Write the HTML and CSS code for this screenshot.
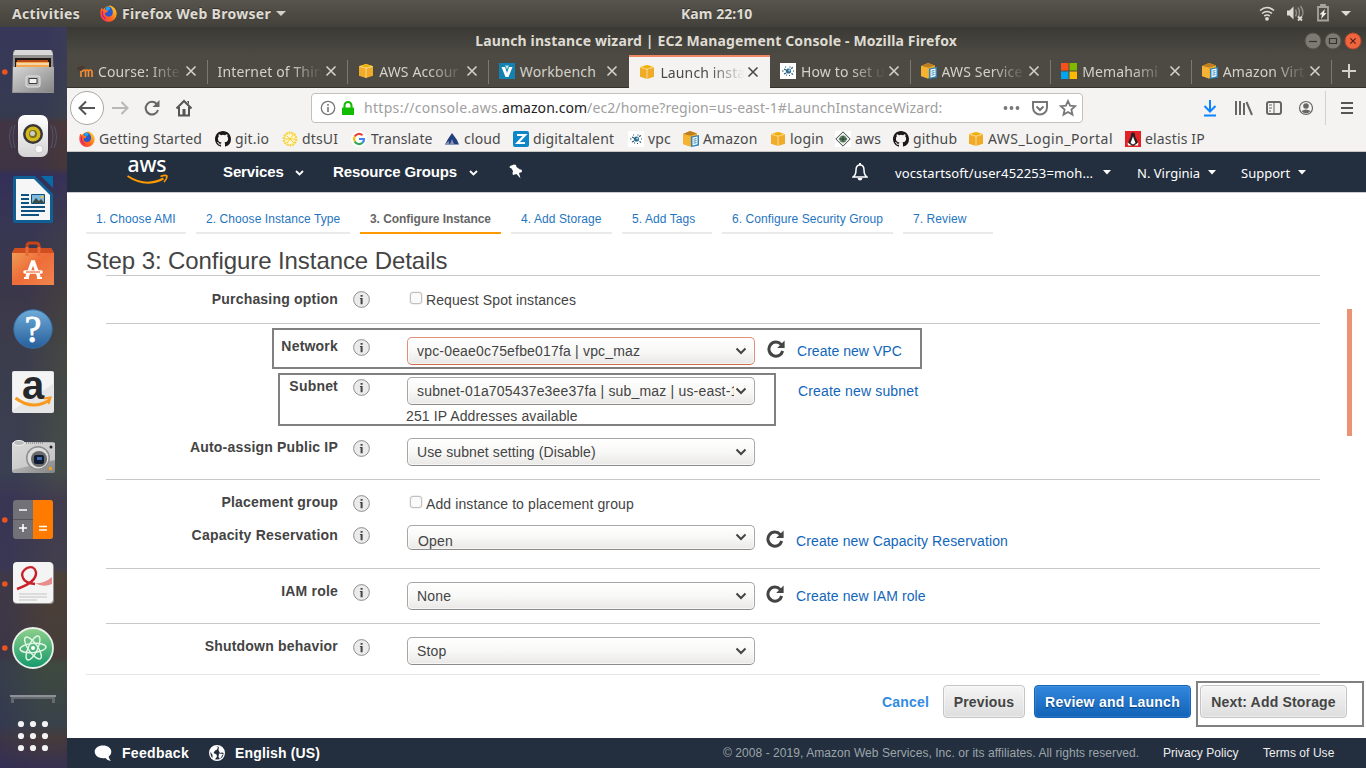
FILE: index.html
```html
<!DOCTYPE html>
<html lang="en">
<head>
<meta charset="utf-8">
<title>Launch instance wizard | EC2 Management Console</title>
<link rel="stylesheet" href="styles.css">
</head>
<body>
<svg class="defs" xmlns="http://www.w3.org/2000/svg">
  <defs>
    <linearGradient id="gMetal" x1="0" y1="0" x2="1" y2="1"><stop offset="0" stop-color="#d6d6d6"/><stop offset="1" stop-color="#858585"/></linearGradient>
    <linearGradient id="gWhite" x1="0" y1="0" x2="0" y2="1"><stop offset="0" stop-color="#fff"/><stop offset="1" stop-color="#d4d4d4"/></linearGradient>
    <linearGradient id="gBag" x1="0" y1="0" x2="1" y2="1"><stop offset="0" stop-color="#f0a258"/><stop offset=".5" stop-color="#ee6c38"/><stop offset="1" stop-color="#f0854e"/></linearGradient>
    <linearGradient id="gHelp" x1="0" y1="0" x2="0" y2="1"><stop offset="0" stop-color="#6fabd8"/><stop offset="1" stop-color="#265f9c"/></linearGradient>
    <linearGradient id="gAtom" x1="0" y1="0" x2="0" y2="1"><stop offset="0" stop-color="#8fd08a"/><stop offset="1" stop-color="#13996c"/></linearGradient>
    <linearGradient id="gFox" x1="0" y1="1" x2="1" y2="0"><stop offset="0" stop-color="#f2265a"/><stop offset=".45" stop-color="#ff6a1c"/><stop offset="1" stop-color="#ffe226"/></linearGradient>
  </defs>
  <symbol id="firefox" viewBox="0 0 16 16">
    <path d="M1.200 2.800l1.800 1.300C4.500 2 7 1 9.500.4 13 1.500 15.700 4.500 15.700 8.300a7.700 7.700 0 0 1-15.400 0c0-2 .2-3.700.9-5.500z" fill="url(#gFox)"/>
    <path d="M5 2.600C7 1 9 1.200 10 2.200c2 1.800 2.400 4.200 1.800 6.300-.8 2.300-3.300 3-5.300 2.200C5 10 4.500 8.500 4.800 7.600l2-.9.9-1.300-2.300-.7-.8-1z" fill="#2a56d0"/>
    <path d="M5.500 2.500Q8 1 9.800 3L8 5.200 5.500 4.500z" fill="#21a8ee"/>
    <path d="M2.500 5.500q-1 5 3 7.500" stroke="#c8158c" stroke-width="1" fill="none"/>
  </symbol>
  <symbol id="cube" viewBox="0 0 16 16">
    <path d="M1 3.200L8 1l7 2.200v9.600L8 15l-7-2.200z" fill="#f0ac28"/><path d="M1 3.200L8 1l7 2.200-7 1.800z" fill="#f8bf12"/><path d="M8 5v10M1.500 3.400L8 5.200l6.500-1.800" stroke="#fbe3ac" stroke-width=".8" fill="none"/><path d="M5 2l6 2.200M11 2L5 4.200" stroke="#d99a1c" stroke-width=".5"/>
  </symbol>
  <symbol id="cubedoc" viewBox="0 0 16 16">
    <path d="M0 3l7-3 7 2.400v10.200L7 15.500 0 13z" fill="#f0ac28"/><path d="M0 3l7-3 7 2.400-7 2.400z" fill="#bd7d21"/><path d="M0 3l7 1.800v10.700L0 13z" fill="#f6b333"/><path d="M8 5.500l8-1.500v10.500L8 16z" fill="#2e83b8"/><path d="M9.500 6.500l5-1v7.800l-5 1.200z" fill="#fff"/><path d="M10.500 8.200l3-.6M10.500 10.200l3-.6M10.500 12.200l3-.6" stroke="#2e83b8"/>
  </symbol>
  <symbol id="github" viewBox="0 0 16 16"><path fill="#1b1817" fill-rule="evenodd" d="M8 0C3.580 0 0 3.580 0 8c0 3.540 2.290 6.530 5.470 7.590.4.070.55-.17.55-.38 0-.19-.01-.82-.01-1.490-2.010.37-2.530-.49-2.690-.94-.09-.23-.48-.94-.82-1.130-.28-.15-.68-.52-.01-.53.63-.01 1.080.58 1.230.82.72 1.210 1.870.87 2.330.66.070-.52.28-.87.51-1.070-1.780-.2-3.640-.89-3.640-3.950 0-.87.31-1.590.82-2.150-.08-.2-.36-1.020.08-2.120 0 0 .67-.21 2.200.82a7.600 7.600 0 0 1 4 0c1.530-1.040 2.200-.82 2.200-.82.44 1.100.16 1.920.08 2.120.51.56.82 1.270.82 2.150 0 3.070-1.870 3.750-3.650 3.950.29.25.54.73.54 1.480 0 1.070-.01 1.930-.01 2.200 0 .21.15.46.55.38A8 8 0 0 0 16 8c0-4.420-3.580-8-8-8z"/></symbol>
  <symbol id="chip" viewBox="0 0 16 16"><path fill="#fff" d="M0 0h16v16H0z"/><circle cx="8.500" cy="8" r="2.600" fill="#2b6c93"/><circle cx="9.300" cy="7.500" r="1.100" fill="#a5d8ea"/><path d="M4 6l2 1M2 8h1.500M4 11l2-1M11 5.500l2-1M13 8h1M11.500 10.500l1.500 1M6.500 11.500v1M10 4.500V3.500M5 4h1M9 12.500h1" stroke="#24506e" stroke-width="1.100"/></symbol>
  <symbol id="close" viewBox="0 0 12 12"><path d="M1.500 1.500l9 9M10.500 1.500l-9 9" stroke="currentColor" stroke-width="1.600" fill="none"/></symbol>
  <symbol id="reload" viewBox="0 0 18 18"><path d="M14.300 4.600A7 7 0 1 0 15.700 11" fill="none" stroke="#444" stroke-width="3"/><path d="M17.600 .6v7.400h-7.400z" fill="#444"/></symbol>
  <symbol id="info" viewBox="0 0 17 17"><circle cx="8.500" cy="8.500" r="7.900" fill="#ebebeb" stroke="#8e8e8e"/><path d="M7.600 4h2v1.700h-2zM6.900 7.100h2.700v6.200h-2V8.100h-.7z" fill="#444"/></symbol>
  <symbol id="chev" viewBox="0 0 12 8"><path d="M1.500 1.500L6 6l4.500-4.500" stroke="#444" stroke-width="2" fill="none"/></symbol>
</svg>

<header class="topbar">
  <span class="activities">Activities</span>
  <svg class="i16"><use href="#firefox"/></svg>
  <span class="appname">Firefox Web Browser</span>
  <svg class="tri" viewBox="0 0 10 5"><path d="M0 0h10L5 5z" fill="#d3d0c8"/></svg>
  <span class="clock">Kam 22:10</span>
  <svg class="tray" viewBox="0 0 96 20">
    <g fill="none" stroke="#dedbd5" stroke-width="1.600"><path d="M3 7.500q7-6 14 0M5 10.500q5-4 10 0M7.200 13q2.800-2 5.600 0"/></g><circle cx="10" cy="15.800" r="1.900" fill="#dedbd5"/>
    <path d="M30 7.500h2.500l4-4v13l-4-4H30z" fill="#dedbd5"/><path d="M38.500 6.500q2 3.500 0 7M41 4.500q3 5 0 10M43.500 3q4 6 1.500 10" stroke="#8f8d86" stroke-width="1.500" fill="none"/><path d="M41 13.500l4 4M45 13.500l-4 4" stroke="#dedbd5" stroke-width="1.800"/>
    <path d="M61 4h10v13.500H61zM64 2h4v2h-4z" fill="none" stroke="#a6a49d" stroke-width="1.800"/><path d="M68 6l-5.500 5.500H65l-1 4.500 5.500-6H67z" fill="#f0eee9"/>
    <path d="M84 8h10l-5 5z" fill="#dedbd5"/>
  </svg>
</header>

<div class="desktop">
<nav class="dock">
  <svg class="launcher" viewBox="0 0 67 64"><circle cx="4.800" cy="32" r="2.800" fill="#e95420"/><path d="M13 13q0-3 3-3h34q3 0 3 3l1 40H12z" fill="#929292"/><path d="M15 10h36l2 5H13z" fill="#d9d9d9"/><path d="M15 18h36v12H15z" fill="#1f1a18"/><path d="M17 20h31v8H17z" fill="#b94a18"/><path d="M16 22h33v6H16z" fill="#f3a64b"/><path d="M17 24h32" stroke="#f6e3c8" stroke-width="1.500"/><path d="M13 27h41v25H13z" fill="url(#gMetal)"/><rect x="26" y="36" width="14" height="11" rx="2" fill="#bbb" stroke="#e4e4e4"/><path d="M29 38.500h8v5h-8z" fill="#f1f1f1" stroke="#3c3c3c"/></svg>
  <svg class="launcher" viewBox="0 0 67 64"><path d="M12 22q-5 11 0 22M15 21q-4 11 0 23M54 22q5 11 0 22M51 21q4 11 0 23" stroke="#566a8c" stroke-opacity=".6" fill="none"/><rect x="18" y="11" width="30" height="42" rx="7" fill="url(#gWhite)"/><circle cx="33" cy="30" r="10" fill="#38383a"/><circle cx="33" cy="30" r="7.500" fill="#d4b91c"/><circle cx="33" cy="30" r="4" fill="#77711f"/><circle cx="32.500" cy="29.500" r="2.500" fill="#ccc"/><circle cx="39" cy="45" r="4" fill="#f7f7f7" stroke="#ccc"/></svg>
  <svg class="launcher" viewBox="0 0 67 64"><path d="M15 8h20l18 18v28q0 1-1 1H15q-2 0-2-2V10q0-2 2-2z" fill="#0f5f94"/><path d="M16 11h18l16 16v25H16z" fill="#f6f6f6"/><path d="M41 8h12v12z" fill="#0a6aa8"/><path d="M21 27h8M21 31h8M21 35h8M21 39h24M21 43h24M21 47h18" stroke="#10527f" stroke-width="2"/><path d="M31.500 26.500h13v9h-13z" fill="#7db9df" stroke="#10527f"/><path d="M32 35l4-5 3 3 2-2 3.500 4z" fill="#3c4b43"/><circle cx="42" cy="29" r="1.300" fill="#f5c12c"/></svg>
  <svg class="launcher" viewBox="0 0 67 64"><path d="M27 23v-9q0-3 3-3h6q3 0 3 3v9" fill="none" stroke="#c74418" stroke-width="3"/><path d="M15 16h36l3 5v32H12V21z" fill="url(#gBag)"/><path d="M12 21l3-5h36l3 5z" fill="#cf4d1f"/><path d="M27 24V15M39 24V15" stroke="#e8693a" stroke-width="3"/><path d="M27 45l5.500-15h1L39 45" fill="none" stroke="#fff" stroke-width="3.600"/><path d="M25 40h16" stroke="#fff" stroke-width="3.600" stroke-linecap="round"/><path d="M26 40h14" stroke="#ee6c38" stroke-width="1.200"/><path d="M24 46h5M37 46h5" stroke="#fff" stroke-width="2"/></svg>
  <svg class="launcher" viewBox="0 0 67 64"><circle cx="33" cy="33" r="19.200" fill="url(#gHelp)" stroke="#3770a8"/><text x="33" y="45.500" text-anchor="middle" class="help-mark">?</text></svg>
  <svg class="launcher" viewBox="0 0 67 64"><rect x="12" y="11" width="42" height="42" rx="2" fill="#e6e6e6"/><path d="M13 12h40v12L13 50z" fill="#f4f4f4"/><text x="33" y="39" text-anchor="middle" class="amazon-a">a</text><path d="M15.500 38q17 13 34 2" stroke="#f79a1d" stroke-width="3" fill="none"/><path d="M44 38.500l6.500-1-2 6.500" stroke="#f79a1d" stroke-width="2" fill="none"/></svg>
  <svg class="launcher" viewBox="0 0 67 64"><rect x="12" y="18" width="43" height="31" rx="2" fill="url(#gMetal)"/><path d="M12 19h43v17L12 46z" fill="#ddd" opacity=".65"/><ellipse cx="19" cy="19" rx="5.500" ry="2.500" fill="#bbb" stroke="#eee"/><path d="M26 19h17" stroke="#777" stroke-dasharray="1 1"/><circle cx="38" cy="34" r="12" fill="#8e8e8e"/><circle cx="38" cy="34" r="10.500" fill="#ddd"/><circle cx="39" cy="35" r="8" fill="#696969"/><rect x="34" y="31" width="10" height="9" rx="2" fill="#101a33"/><path d="M37 33h5v3h-5z" fill="#3c69a8"/><circle cx="51" cy="23" r="1.500" fill="#222"/><path d="M49 43h3v3h-3z" fill="#efa01a"/></svg>
  <svg class="launcher" viewBox="0 0 67 64"><circle cx="4.800" cy="32" r="2.800" fill="#e95420"/><rect x="13" y="12" width="40" height="39" rx="3" fill="#717177"/><path d="M33 12h17q3 0 3 3v33q0 3-3 3H33z" fill="#ff7b00"/><path d="M13 31.500h20" stroke="#55555a"/><path d="M19 22h8M19 40h8M23 36v8M39 38.500h8M39 42h8" stroke="#fff" stroke-width="1.600"/></svg>
  <svg class="launcher" viewBox="0 0 67 64"><circle cx="4.800" cy="32" r="2.800" fill="#e95420"/><rect x="13" y="11" width="41" height="41" rx="4" fill="#8f8f8f"/><rect x="13" y="10" width="40" height="41" rx="4" fill="#f4f4f4"/><path d="M35 31q9 1 17-6v7q-9 4-17-1z" fill="#e98c8c"/><path d="M17 37q20-7 19-17-2-7-9-4-7 4-4 10 2 5 12 6" stroke="#c9212b" stroke-width="2.400" fill="none"/><path d="M19 42h28M19 45h28M19 48h18" stroke="#c4c4c4" stroke-width="1.200"/></svg>
  <svg class="launcher" viewBox="0 0 67 64"><circle cx="4.800" cy="32" r="2.800" fill="#e95420"/><circle cx="33" cy="32" r="20" fill="url(#gAtom)" stroke="#e9efe9" stroke-width="1.800"/><g fill="none" stroke="#e6f7ea" stroke-width="1.400"><ellipse cx="33" cy="32" rx="13" ry="4.600" transform="rotate(-5 33 32)"/><ellipse cx="33" cy="32" rx="13" ry="4.600" transform="rotate(55 33 32)"/><ellipse cx="33" cy="32" rx="13" ry="4.600" transform="rotate(115 33 32)"/></g><circle cx="33" cy="32" r="2" fill="#fff"/></svg>
  <svg class="launcher-end" viewBox="0 0 67 88"><path d="M11 15h44v8h-3v-4H14v4h-3z" fill="#777b80" opacity=".7"/><path d="M10 16h46" stroke="#8e9297" stroke-width="2"/><g fill="#f3f3f3"><circle cx="21" cy="44" r="3.100"/><circle cx="33" cy="44" r="3.100"/><circle cx="45" cy="44" r="3.100"/><circle cx="21" cy="56" r="3.100"/><circle cx="33" cy="56" r="3.100"/><circle cx="45" cy="56" r="3.100"/><circle cx="21" cy="68" r="3.100"/><circle cx="33" cy="68" r="3.100"/><circle cx="45" cy="68" r="3.100"/></g></svg>
</nav>

<div class="window">
  <div class="titlebar"><span>Launch instance wizard | EC2 Management Console - Mozilla Firefox</span>
    <svg class="winbtns" viewBox="0 0 58 18"><circle cx="9" cy="9" r="8" fill="#7d7a73" stroke="#55524b"/><path d="M5 9.500h8" stroke="#34332f" stroke-width="1.200"/><circle cx="29" cy="9" r="8" fill="#7d7a73" stroke="#55524b"/><path d="M25.500 6.500h7v5h-7z" fill="none" stroke="#34332f" stroke-width="1.200"/><circle cx="49" cy="9" r="8" fill="#ee6540" stroke="#b8492a"/><path d="M46.300 6.300l5.400 5.400M51.700 6.300l-5.400 5.400" stroke="#572011" stroke-width="1.200"/></svg>
  </div>
  <div class="tabs">
    <div class="tab"><svg class="i16" viewBox="0 0 16 16"><path d="M4 14V8M8.500 14V9q0-2 1.500-2T11.500 9v5M11.500 9q0-2 1.700-2T15 9v5M5.500 9q0-2 1.500-2T8.500 9" stroke="#f08a35" stroke-width="1.700" fill="none"/><path d="M0 5l6-2 2 2-5 2zM1 5v4" stroke="#4b3a34" fill="#4b3a34"/></svg><span class="t">Course: Inte</span><svg class="x"><use href="#close"/></svg></div>
    <div class="tab"><span class="t wide">Internet of Thin</span><svg class="x"><use href="#close"/></svg></div>
    <div class="tab"><svg class="i16"><use href="#cube"/></svg><span class="t">AWS Accour</span><svg class="x"><use href="#close"/></svg></div>
    <div class="tab last"><svg class="i16" viewBox="0 0 16 16"><path d="M0 0h16v16H0z" fill="#1183b2"/><path d="M2.500 4H6l2 6 2-6h3.500L9.500 14h-3z" fill="#fff"/><path d="M6 2.500h4l-2 4z" fill="#bfe3f0"/></svg><span class="t full">Workbench</span><svg class="x"><use href="#close"/></svg></div>
    <div class="tab active"><svg class="i16"><use href="#cube"/></svg><span class="t">Launch insta</span><svg class="x"><use href="#close"/></svg></div>
    <div class="tab"><svg class="i16"><use href="#chip"/></svg><span class="t">How to set u</span><svg class="x"><use href="#close"/></svg></div>
    <div class="tab"><svg class="i16"><use href="#cubedoc"/></svg><span class="t">AWS Service</span><svg class="x"><use href="#close"/></svg></div>
    <div class="tab"><svg class="i16" viewBox="0 0 16 16"><path d="M0 0h7.500v7.500H0z" fill="#f4511e"/><path d="M8.500 0H16v7.500H8.500z" fill="#7fba00"/><path d="M0 8.500h7.500V16H0z" fill="#00a4ef"/><path d="M8.500 8.500H16V16H8.500z" fill="#ffb900"/></svg><span class="t">Memahami</span><svg class="x"><use href="#close"/></svg></div>
    <div class="tab"><svg class="i16"><use href="#cubedoc"/></svg><span class="t">Amazon Virt</span><svg class="x"><use href="#close"/></svg></div>
    <svg class="plus" viewBox="0 0 14 14"><path d="M7 0v14M0 7h14" stroke="#d4d1c9" stroke-width="2"/></svg>
  </div>

  <div class="toolbar">
    <svg class="navicons" viewBox="0 0 132 36"><circle cx="20" cy="18" r="16.500" fill="#fff" stroke="#aaa7a2"/><path d="M28 18H13M19 11.500L12.500 18l6.500 6.500" stroke="#555" stroke-width="2" fill="none"/><path d="M45 18h15M54.500 12l6 6-6 6" stroke="#b9b8b5" stroke-width="2" fill="none"/><path d="M89.700 14A6.300 6.300 0 1 0 91 20" stroke="#666" stroke-width="2" fill="none"/><path d="M92.500 10v7h-7z" fill="#666"/><path d="M109.500 18.500L117 11l7.500 7.500M112 17v8.500h10V17" stroke="#555" stroke-width="2" fill="none"/><path d="M115.500 19h3v6h-3zM120 11h2v4z" fill="#555"/></svg>
    <div class="url">
      <svg class="urlicons" viewBox="0 0 36 20"><circle cx="8" cy="10" r="6.700" fill="none" stroke="#777" stroke-width="1.300"/><path d="M8 9v5M8 6v1.800" stroke="#777" stroke-width="1.600"/><path d="M22 9.500h12V17H22z" fill="#12bc00"/><path d="M24.500 10V7.500a3.500 3.500 0 0 1 7 0V10" stroke="#12bc00" stroke-width="2" fill="none"/></svg>
      <span class="address"><span class="host">https://console.aws.</span><b>amazon.com</b>/ec2/home?region=us-east-1#LaunchInstanceWizard:</span>
      <svg class="pageicons" viewBox="0 0 76 20"><g fill="#777"><circle cx="4.500" cy="10" r="1.900"/><circle cx="10.500" cy="10" r="1.900"/><circle cx="16.500" cy="10" r="1.900"/></g><path d="M32 4h14v5.500a7 7 0 0 1-14 0zM35.500 8.500l3.500 3.500 3.500-3.500" fill="none" stroke="#777" stroke-width="2"/><path d="M67 3l2.100 4.700 5.100.5-3.800 3.400 1.100 5-4.500-2.600-4.500 2.600 1.100-5-3.800-3.400 5.100-.5z" fill="none" stroke="#777" stroke-width="1.800"/></svg>
    </div>
    <svg class="toolicons" viewBox="0 0 163 36"><path d="M7 10v11M1.500 16L7 21.500l5.500-5.500M1 25.500h12" stroke="#0a84ff" stroke-width="2" fill="none"/><path d="M33 11v14M37 11v14M41 13v12M43.500 12l5.500 13" stroke="#666" stroke-width="2" fill="none"/><rect x="64" y="12" width="14" height="12" rx="2" fill="none" stroke="#666" stroke-width="2"/><path d="M71 12v12" stroke="#666"/><path d="M66 15h3M66 18h3M66 21h2" stroke="#666"/><circle cx="103" cy="18" r="6.500" fill="none" stroke="#666" stroke-width="1.200"/><circle cx="103" cy="16" r="2.800" fill="#666"/><path d="M98.500 21q4.500-3 9 0-4.500 5-9 0z" fill="#666"/><path d="M122.500 1v34" stroke="#d3d1ce"/><path d="M138 13h12M138 18h12M138 23h12" stroke="#555" stroke-width="2"/></svg>
  </div>

  <div class="bookmarks">
    <a><svg class="i16"><use href="#firefox"/></svg>Getting Started</a>
    <a><svg class="i16"><use href="#github"/></svg>git.io</a>
    <a><svg class="i16" viewBox="0 0 16 16"><circle cx="8" cy="8" r="6.200" fill="#fff8d6" stroke="#f5d544" stroke-width="2.400" stroke-dasharray="2 .7"/><path d="M3 8h10M5 5l3 3 3-4M5 12l3-4 4 4" stroke="#f3cf35" fill="none"/></svg>dtsUI</a>
    <a><svg class="i16" viewBox="0 0 16 16"><circle cx="8" cy="8" r="8" fill="#fff"/><g fill="none" stroke-width="2.200"><path d="M3.700 5.500A5 5 0 0 1 11.500 4.300" stroke="#ea4335"/><path d="M3.700 5.500a5 5 0 0 0 0 5" stroke="#fbbc05"/><path d="M3.700 10.500a5 5 0 0 0 7.700 1.300" stroke="#34a853"/><path d="M11.400 11.800A5 5 0 0 0 13 8H8" stroke="#4285f4"/></g></svg>Translate</a>
    <a><svg class="i16" viewBox="0 0 16 16"><path d="M8 2l5 7 2 4.500H1L4 8z" fill="#223f7d"/><path d="M6 13l2-5 2 5zM1 13l4-3v3z" fill="#8493b4"/></svg>cloud</a>
    <a><svg class="i16" viewBox="0 0 16 16"><rect width="16" height="16" rx="2" fill="#0d87c8"/><path d="M4 4h8L4.500 12H12" stroke="#fff" stroke-width="2.200" fill="none"/></svg>digitaltalent</a>
    <a><svg class="i16"><use href="#chip"/></svg>vpc</a>
    <a><svg class="i16"><use href="#cubedoc"/></svg>Amazon</a>
    <a><svg class="i16"><use href="#cube"/></svg>login</a>
    <a><svg class="i16" viewBox="0 0 16 16"><path d="M0 0h16v16H0z" fill="#fff"/><path d="M8 .8L15.200 8 8 15.200.8 8z" fill="#e9efe9" stroke="#444"/><circle cx="8" cy="8" r="3.500" fill="#64876c"/><path d="M4 8h8M8 5v6" stroke="#263c30"/></svg>aws</a>
    <a><svg class="i16"><use href="#github"/></svg>github</a>
    <a class="portal"><svg class="i16"><use href="#cube"/></svg>AWS_Login_Portal</a>
    <a><svg class="i16" viewBox="0 0 16 16"><path d="M0 0h16v16H0z" fill="#e32127"/><path d="M8 1.500c2 0 2 2 2.200 4C11 8 13 10 12.500 13L10 14.500H6L3.500 13C3 10 5 8 5.800 5.500 6 3.500 6 1.500 8 1.500z" fill="#252122"/><path d="M8 5.500l2.500 6.500-2.500 1.500L5.500 12zM2.500 11.500L7 14.500H3zM13.500 11.500L9 14.500h4z" fill="#fff"/></svg>elastis IP</a>
  </div>

  <div class="awsnav">
    <svg class="awslogo" viewBox="0 0 42 28"><text x="0.500" y="14" class="aws-word" textLength="39" lengthAdjust="spacingAndGlyphs">aws</text><path d="M.5 18q18 12 36 2.500" fill="none" stroke="#f90" stroke-width="2"/><path d="M33.500 18.500q5-2 6.500-.5 0 3-3 6" fill="none" stroke="#f90" stroke-width="1.700"/></svg>
    <b class="services">Services</b><svg class="caret" viewBox="0 0 9 6"><path d="M1 1l3.500 3.500L8 1" stroke="#fff" stroke-width="1.800" fill="none"/></svg>
    <b class="groups">Resource Groups</b><svg class="caret" viewBox="0 0 9 6"><path d="M1 1l3.500 3.500L8 1" stroke="#fff" stroke-width="1.800" fill="none"/></svg>
    <svg class="pin" viewBox="0 0 14 15"><path d="M5 .5l2 .5.5 2L11 5.500l1.500 0 .5 2.500-3 1 1.500 5.500-4-4.500-3.500 1-.5-1.500L4 7 2.500 4.500 .5 3.500 1 2z" fill="#fff"/></svg>
    <svg class="bell" viewBox="0 0 16 18"><path d="M1 14q3-2 3-7 0-5 4-5t4 5q0 5 3 7z" fill="none" stroke="#fff" stroke-width="1.500"/><path d="M5.500 15h5q-.5 2.500-2.500 2.500T5.500 15zM7 0h2v2H7z" fill="#fff"/></svg>
    <span class="user">vocstartsoft/user452253=moh...</span><svg class="arrow" viewBox="0 0 8 5"><path d="M0 0h8L4 4.500z" fill="#fff"/></svg>
    <span class="region">N. Virginia</span><svg class="arrow" viewBox="0 0 8 5"><path d="M0 0h8L4 4.500z" fill="#fff"/></svg>
    <span class="support">Support</span><svg class="arrow" viewBox="0 0 8 5"><path d="M0 0h8L4 4.500z" fill="#fff"/></svg>
  </div>

  <main class="content">
    <div class="steps">
      <a>1. Choose AMI</a><a>2. Choose Instance Type</a><a class="current">3. Configure Instance</a><a>4. Add Storage</a><a>5. Add Tags</a><a>6. Configure Security Group</a><a>7. Review</a>
    </div>
    <h1>Step 3: Configure Instance Details</h1>
    <div class="form">
      <section class="purchasing">
        <div class="row"><label>Purchasing option</label><svg class="info"><use href="#info"/></svg><div class="check"><i></i>Request Spot instances</div></div>
      </section>
      <section class="networking">
        <div class="row r40"><label>Network</label><svg class="info"><use href="#info"/></svg><div class="select focus"><span>vpc-0eae0c75efbe017fa | vpc_maz</span><svg><use href="#chev"/></svg></div><svg class="reload shift"><use href="#reload"/></svg><a class="shift">Create new VPC</a></div>
        <div class="row r61"><label>Subnet</label><svg class="info"><use href="#info"/></svg><div><div class="select"><span>subnet-01a705437e3ee37fa | sub_maz | us-east-1a</span><svg><use href="#chev"/></svg></div><p>251 IP Addresses available</p></div><span></span><a class="shift2">Create new subnet</a></div>
        <div class="row"><label>Auto-assign Public IP</label><svg class="info"><use href="#info"/></svg><div class="select"><span class="tight">Use subnet setting (Disable)</span><svg><use href="#chev"/></svg></div></div>
      </section>
      <section class="placement">
        <div class="row r33"><label>Placement group</label><svg class="info"><use href="#info"/></svg><div class="check low"><i></i>Add instance to placement group</div></div>
        <div class="row capacity"><label>Capacity Reservation</label><svg class="info"><use href="#info"/></svg><div class="select short"><span>Open</span><svg><use href="#chev"/></svg></div><svg class="reload"><use href="#reload"/></svg><a>Create new Capacity Reservation</a></div>
      </section>
      <section class="iam">
        <div class="row"><label>IAM role</label><svg class="info"><use href="#info"/></svg><div class="select"><span>None</span><svg><use href="#chev"/></svg></div><svg class="reload"><use href="#reload"/></svg><a>Create new IAM role</a></div>
      </section>
      <section class="shutdown">
        <div class="row"><label>Shutdown behavior</label><svg class="info"><use href="#info"/></svg><div class="select"><span>Stop</span><svg><use href="#chev"/></svg></div></div>
      </section>
    </div>
    <div class="actions"><a>Cancel</a><button>Previous</button><button class="primary">Review and Launch</button><button class="next">Next: Add Storage</button></div>
    <div class="scroll-thumb"></div>
    <div class="mark mark-network"></div>
    <div class="mark mark-subnet"></div>
    <div class="mark mark-next"></div>
  </main>

  <footer class="footer">
    <svg class="foot-icon" viewBox="0 0 18 18"><path d="M9 1.500c4.700 0 8.300 2.700 8.300 6.300 0 2-1 3.500-2.600 4.700.2 1.500 1 3 2.300 4.500-2.500-.3-4.500-1.500-5.500-3-5.500 1-10.800-1.800-10.800-6.200C.7 4.200 4.300 1.500 9 1.500z" fill="#fff"/></svg><b class="feedback">Feedback</b>
    <svg class="foot-icon" viewBox="0 0 18 18"><circle cx="9" cy="9" r="7.300" fill="#242f3e" stroke="#fff" stroke-width="1.400"/><path d="M2 7q1-5 6-5l2 1.500L8.500 6 7 6.500 5.500 9l3 1.500.5 2-2.500 3.500-2-1L4.500 11zM11 2q5 2 5 7l-2-.5-2 .5-1.500-3zM11 9.500l4 .5-3 5-1.500-2z" fill="#fff"/></svg><b class="lang">English (US)</b>
    <span class="copy">© 2008 - 2019, Amazon Web Services, Inc. or its affiliates. All rights reserved.</span>
    <span class="privacy">Privacy Policy</span><span class="terms">Terms of Use</span>
  </footer>
</div>
</div>
</body>
</html>
```
FILE: styles.css
```css
* { box-sizing: border-box; }
body { margin: 0; width: 1366px; height: 768px; overflow: hidden; font-family: "Liberation Sans", Arial, sans-serif; color: #444; }
svg { display: block; flex: none; }
.defs { position: absolute; width: 0; height: 0; }
.i16 { width: 16px; height: 16px; }

.topbar { height: 27px; background: linear-gradient(#57544c, #43413b); display: grid; grid-template-columns: 88px 16px 155px 401px 1fr 96px; grid-template-rows: 26px; padding: 0 13px 0 12px; align-items: center; font: bold 14px "Noto Sans", sans-serif; letter-spacing: .3px; color: #dfdbd2; white-space: nowrap; text-shadow: 0 -1px #33322e; }
.topbar .i16 { width: 17px; height: 17px; }
.topbar .appname { padding-left: 6px; }
.tri { width: 10px; height: 5px; margin-left: 5px; }
.clock { margin-left: 9px; letter-spacing: .05px; }
.tray { width: 96px; height: 20px; }

.desktop { display: flex; height: 741px; }
.dock { width: 67px; height: 741px; padding-top: 13px; display: flex; flex-direction: column; background: linear-gradient(94deg, #2c2c5c66 0 40%, #3d3a3200 75%), linear-gradient(#3f3f58 0, #3d4449 12%, #503b33 13%, #4a3933 19%, #393156 20%, #3f3f4b 28%, #463f3e 36%, #454842 44%, #444c4b 60%, #413b4e 64%, #423f4d 73%, #4c4037 74%, #463d3a 85%, #3e4a3f 86%, #39424a 94%, #463b3b 96%, #363051 100%); }
.launcher { width: 67px; height: 64px; }
.launcher-end { width: 67px; height: 88px; }
.help-mark { font: 37px "Liberation Serif", serif; fill: #fff; stroke: #fff; stroke-width: 1px; }
.amazon-a { font: bold 40px "Liberation Sans", sans-serif; fill: #26282b; }

.window { width: 1299px; display: flex; flex-direction: column; }
.titlebar { height: 28px; background: linear-gradient(#3a3934, #4c4a43); display: flex; align-items: center; justify-content: flex-end; font: bold 14px "Noto Sans", sans-serif; letter-spacing: .14px; color: #dfdbd2; padding-right: 4px; }
.titlebar span { margin-right: 347px; white-space: nowrap; }
.winbtns { width: 58px; height: 18px; }
.tabs { height: 33px; background: #4c4a43; border-bottom: 1px solid #33322e; display: flex; font: 14px "Noto Sans", sans-serif; letter-spacing: .13px; color: #d4d1c9; }
.tab { width: 140.6px; height: 32px; padding: 1px 11px 0 10px; display: flex; align-items: center; flex: none; }
.tab:not(.last):not(.active) { background: linear-gradient(#7b7972, #7b7972) right 5px / 1px 24px no-repeat; }
.tab .i16 { margin-right: 5px; }
.tab .t { width: 84px; white-space: nowrap; -webkit-mask-image: linear-gradient(90deg, #000 60%, transparent); mask-image: linear-gradient(90deg, #000 60%, transparent); }
.tab .t.wide { width: 104px; -webkit-mask-image: linear-gradient(90deg, #000 70%, transparent); mask-image: linear-gradient(90deg, #000 70%, transparent); }
.tab .t.full { -webkit-mask-image: none; mask-image: none; }
.x { width: 12px; height: 12px; margin-left: auto; }
.tab.active { background: #f4f3f2; color: #4a4a4a; height: 33px; border-top: 2px solid #f08763; padding-top: 0; }
.plus { width: 14px; height: 14px; margin: 9px 0 0 10px; }

.toolbar { height: 40px; background: #f4f3f2; display: flex; align-items: center; }
.navicons { width: 132px; height: 36px; }
.url { width: 772px; height: 30px; margin-left: 112px; border: 1px solid #c3c0bb; border-radius: 4px; background: #fff; display: flex; align-items: center; padding: 0 5px 0 8px; }
.urlicons { width: 36px; height: 20px; }
.address { margin-left: 8px; font: 14px "Noto Sans", sans-serif; letter-spacing: .11px; color: #a0a0a0; white-space: nowrap; }
.address .host { letter-spacing: .31px; }
.address b { font-weight: 400; color: #222; letter-spacing: .05px; }
.pageicons { width: 76px; height: 20px; margin-left: auto; }
.toolicons { width: 163px; height: 36px; margin-left: 120px; }

.bookmarks { height: 24px; background: #f4f3f2; border-bottom: 1px solid #c9c6c2; display: grid; grid-template-columns: 136px 67px 69px 93px 69px 115px 55px 87px 65px 58px 75px 157px 100px; padding-left: 12px; align-items: center; font: 14px "Noto Sans", sans-serif; letter-spacing: .16px; color: #4a4a4a; }
.bookmarks a { display: flex; align-items: center; gap: 4px; white-space: nowrap; line-height: 20px; }
.bookmarks .portal { letter-spacing: .47px; }

.awsnav { height: 41px; background: #232f3e; border-bottom: 1px solid #c8cbcf; display: flex; align-items: center; color: #fff; padding-left: 60px; white-space: nowrap; font-size: 15px; letter-spacing: -.12px; }
.awslogo { width: 42px; height: 28px; margin-top: 0; }
.aws-word { font: 500 22px "Noto Sans", sans-serif; fill: #fff; }
.caret { width: 9px; height: 6px; margin-top: 2px; }
.services { width: 60px; margin: 0 12px 0 54px; }
.groups { width: 124px; margin: 0 12px 0 29px; }
.pin { width: 14px; height: 15px; margin-left: 31px; }
.bell { width: 16px; height: 18px; margin-left: 329px; }
.user, .region, .support { font: 13px "Noto Sans", sans-serif; letter-spacing: 0; padding-top: 2px; }
.user { width: 198px; margin-left: 27px; letter-spacing: .12px; }
.region { width: 62px; margin-left: 26px; }
.support { width: 50px; margin-left: 25px; }
.arrow { width: 8px; height: 5px; margin: 2px 0 0 10px; }
.region + .arrow { margin-left: 9px; }
.support + .arrow { margin-left: 7px; }

.content { height: 546px; background: #fff; position: relative; }
.steps { display: flex; gap: 10px; padding: 10px 0 0 19px; height: 42px; }
.steps a { height: 31px; border-bottom: 2px solid #eaeaea; padding: 9px 0 0 10px; font-size: 12px; line-height: 14px; letter-spacing: .08px; color: #1f75bf; white-space: nowrap; }
.steps a:nth-child(1) { width: 100px; }
.steps a:nth-child(2) { width: 154px; }
.steps a:nth-child(3) { width: 141px; }
.steps a:nth-child(4) { width: 101px; }
.steps a:nth-child(5) { width: 90px; }
.steps a:nth-child(6) { width: 171px; }
.steps a:nth-child(7) { width: 90px; }
.steps a.current { border-color: #f90; color: #666; font-weight: bold; letter-spacing: -.05px; }
h1 { margin: 0 0 0 19px; height: 40px; font-weight: 400; font-size: 24px; line-height: 52px; letter-spacing: -.08px; white-space: nowrap; }
.form { margin: 0 46px 0 39px; height: 399px; font-size: 14px; letter-spacing: .12px; }
section { border-top: 1px solid #c9c9c9; padding-top: 13px; }
.purchasing { height: 48px; padding-top: 14px; }
.networking { height: 156px; }
.placement { height: 89px; }
.iam { height: 55px; }
.shutdown { height: 51px; }
.row { display: grid; grid-template-columns: 247px 54px 348px 41px auto; justify-content: start; align-items: start; }
.r40 { height: 40px; }
.r61 { height: 61px; }
.r33 { height: 33px; }
label { width: 232px; text-align: right; font-weight: bold; line-height: 18px; letter-spacing: .2px; white-space: nowrap; }
.info { width: 17px; height: 17px; margin-top: 2px; }
.purchasing .info, .capacity .info { margin-top: 1px; }
.select { width: 348px; height: 28px; border: 1px solid #a9a7a4; border-bottom-color: #8d8b88; border-radius: 5px; background: linear-gradient(#fff, #f8f8f7 50%, #e9e8e7); box-shadow: inset 0 0 0 1px #ffffff99; display: flex; align-items: center; padding-left: 9px; }
.select span { width: 317px; white-space: nowrap; overflow: hidden; line-height: 18px; letter-spacing: .18px; padding-top: 1px; }
.select span.tight { letter-spacing: .1px; }
.select svg { width: 12px; height: 8px; margin-left: 1px; }
.select.focus { border-color: #df9076; border-bottom-color: #cd6b4a; }
.select.short { height: 25px; margin-top: -1px; }
.select.short span { margin-top: 6px; padding-left: 1px; }
.row p { margin: 2px 0 0 -1px; line-height: 18px; }
.row a { color: #1166bb; line-height: 29px; letter-spacing: .11px; }
.row a.shift { margin-left: 1px; letter-spacing: .04px; }
.row a.shift2 { margin-left: 2px; letter-spacing: .16px; }
.capacity a { line-height: 31px; }
.reload { width: 18px; height: 18px; margin: 3px 0 0 11px; }
.capacity .reload { margin-top: 4px; }
.reload.shift { margin-left: 12px; }
.check { display: flex; align-items: flex-start; gap: 4px; line-height: 20px; letter-spacing: .1px; padding-left: 3px; }
.check i { width: 12px; height: 12px; border: 1px solid #c2c0be; border-radius: 3px; background: #fafafa; margin-top: 2px; box-shadow: 0 0 0 .5px #e3e2e0; }
.check.low { padding-top: 1px; }
.actions { width: 1234px; margin-left: 19px; border-top: 1px solid #e6e6e6; padding-top: 10px; display: flex; justify-content: flex-end; align-items: center; font-size: 14px; font-weight: bold; }
.actions a { color: #338be2; margin-right: 14px; letter-spacing: .18px; padding-top: 2px; }
button { height: 33px; border: 1px solid #c5c5c5; border-radius: 4px; background: linear-gradient(#f5f5f5, #dedede); box-shadow: inset 0 0 0 1px #ffffff66; font: bold 14px "Liberation Sans", sans-serif; color: #444; letter-spacing: .18px; padding: 2px 0 0; white-space: nowrap; flex: none; width: 82px; }
button.primary { width: 157px; margin: 0 9px; background: linear-gradient(#3387dc, #1163b7); border-color: #1166bb; color: #fff; letter-spacing: .25px; text-shadow: 0 1px 1px #003c7a; box-shadow: inset 0 0 0 1px #ffffff18; }
button.next { width: 147px; margin-right: -27px; }
.scroll-thumb { position: absolute; left: 1280px; top: 116px; width: 5px; height: 127px; background: #ec9171; }
.mark { position: absolute; border: 2px solid #808080; }
.mark-network { left: 205px; top: 135px; width: 650px; height: 41px; }
.mark-subnet { left: 211px; top: 180px; width: 498px; height: 53px; }
.mark-next { left: 1129px; top: 488px; width: 168px; height: 46px; }

.footer { height: 30px; background: #232f3e; color: #fff; display: flex; align-items: center; padding-left: 27px; font-size: 12px; white-space: nowrap; letter-spacing: .06px; }
.footer b { font-size: 14px; letter-spacing: .3px; }
.footer .lang { letter-spacing: .15px; }
.foot-icon { width: 18px; height: 18px; }
.feedback { width: 67px; margin: 0 19px 0 10px; }
.lang { width: 85px; margin-left: 9px; }
.copy { width: 416px; margin-left: 403px; color: #9da5ab; }
.privacy { width: 76px; margin-left: 24px; color: #eee; }
.terms { margin-left: 24px; color: #eee; }
```
